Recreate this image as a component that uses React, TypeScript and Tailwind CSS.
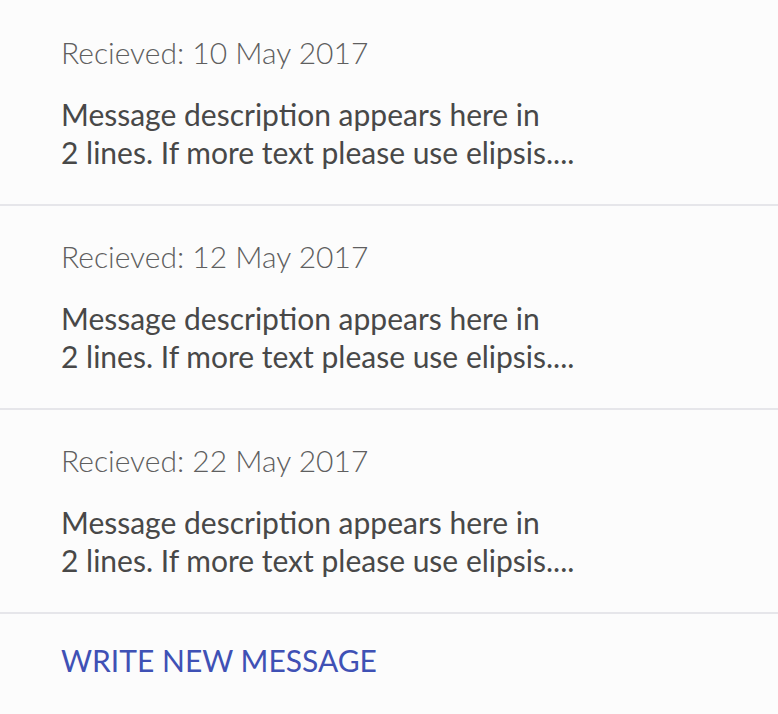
const messages = [
  { id: 1, date: "10 May 2017" },
  { id: 2, date: "12 May 2017" },
  { id: 3, date: "22 May 2017" },
];

export default function App() {
  return (
    <div className="min-h-[714px] w-[778px] bg-[#fcfcfc] pt-[2px] font-['Lato',sans-serif]">
      {messages.map((m) => (
        <div key={m.id} className="h-[204px] border-b-2 border-[#e6e6ea] pl-[61px] pt-[32px]">
          <p className="text-[30px] font-light leading-[36px] text-[#5f5f5f]">
            Recieved: {m.date}
          </p>
          <p className="mt-[25px] whitespace-nowrap text-[30px] leading-[38px] text-[#484848]">
            Message description appears here in
            <br />2 lines. If more text please use elipsis....
          </p>
        </div>
      ))}
      <button className="pl-[61px] pt-[28px] text-[30px] leading-[36px] text-[#3f51b5]">
        WRITE NEW MESSAGE
      </button>
    </div>
  );
}
